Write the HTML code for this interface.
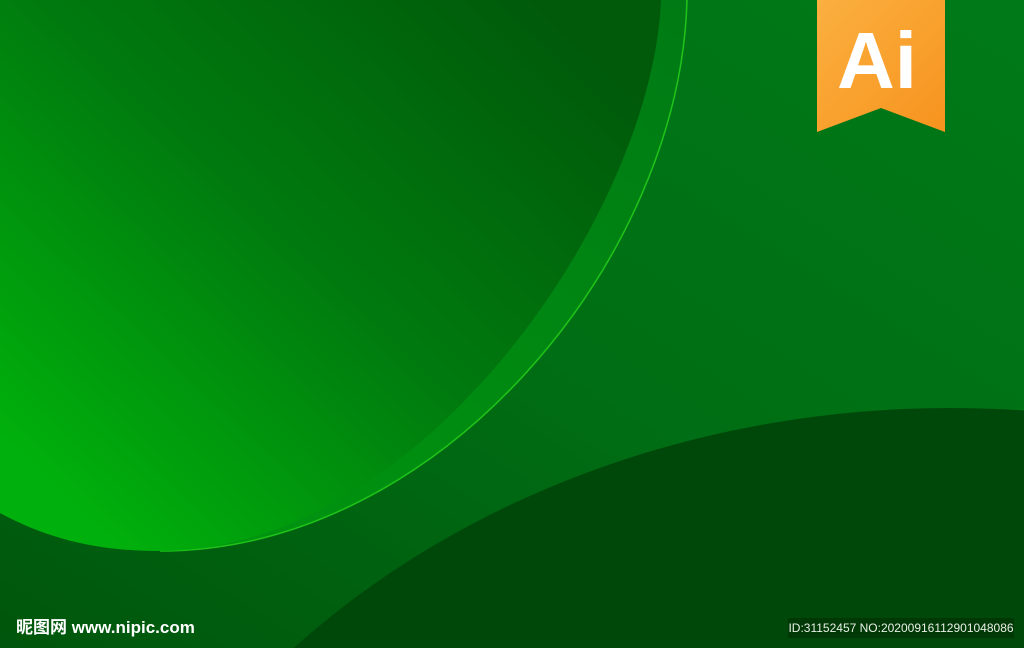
<!DOCTYPE html>
<html><head><meta charset="utf-8"><style>
html,body{margin:0;padding:0;width:1024px;height:648px;overflow:hidden;background:#006c14;position:relative}
svg{position:absolute;left:0;top:0;display:block}
.wm{position:absolute;left:16px;top:618px;color:#fff;font:bold 17px/20px "Liberation Sans","Noto Sans CJK SC",sans-serif;white-space:nowrap}
.id{position:absolute;left:788px;top:618px;width:226px;height:20px;background:rgba(0,40,0,0.45);color:#e8f0e8;font:12px "Liberation Sans",sans-serif;line-height:20px;text-align:center;white-space:nowrap}
</style></head><body>
<svg width="1024" height="648" viewBox="0 0 1024 648">
<defs>
<linearGradient id="bg" x1="1" y1="0" x2="0" y2="1">
<stop offset="0" stop-color="#007a18"/><stop offset="0.5" stop-color="#006e14"/><stop offset="1" stop-color="#00560c"/>
</linearGradient>
<linearGradient id="c" x1="0.9" y1="0.1" x2="0.05" y2="0.85">
<stop offset="0" stop-color="#005a0a"/><stop offset="0.5" stop-color="#007a0e"/><stop offset="1" stop-color="#00b00c"/>
</linearGradient>
<linearGradient id="ring" x1="1" y1="0" x2="0" y2="1">
<stop offset="0" stop-color="#007a14"/><stop offset="1" stop-color="#009a0e"/>
</linearGradient>
<linearGradient id="org" x1="0" y1="0" x2="1" y2="1">
<stop offset="0" stop-color="#fbb040"/><stop offset="1" stop-color="#f7931e"/>
</linearGradient>
</defs>
<rect width="1024" height="648" fill="url(#bg)"/>
<path d="M0,0 L687,0 C680,260 440,551 160,551 C100,551 50,540 0,513 Z" fill="url(#ring)"/>
<path d="M687,0 C680,260 440,551 160,551" fill="none" stroke="#1fc41a" stroke-width="1.5"/>
<path d="M0,0 L661,0 C652,215 420,551 160,551 C100,551 50,540 0,513 Z" fill="url(#c)"/>
<ellipse cx="950" cy="1168" rx="900" ry="760" fill="#00480a"/>
<polygon points="817,0 945,0 945,132 881,108 817,132" fill="url(#org)"/>
<text x="877" y="88" text-anchor="middle" fill="#fff" font-family="Liberation Sans, sans-serif" font-weight="bold" font-size="80">Ai</text>
</svg>
<div class="wm">昵图网 www.nipic.com</div>
<div class="id">ID:31152457 NO:20200916112901048086</div>
</body></html>
